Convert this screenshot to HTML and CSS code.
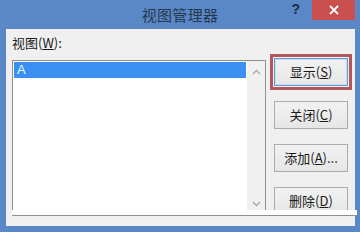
FILE: index.html
```html
<!DOCTYPE html>
<html>
<head>
<meta charset="utf-8">
<link rel="stylesheet" href="styles.css">
</head>
<body>
<div class="window">
  <div class="titlebar">
    <div></div>
    <div class="title">视图管理器</div>
    <div class="controls">
      <span class="help">?</span>
      <span class="close"><svg width="10" height="10" viewBox="0 0 10 10"><path d="M1 1L9 9M9 1L1 9" stroke="#fff" stroke-width="1.8" fill="none"/></svg></span>
    </div>
  </div>
  <div class="client">
    <div class="left">
      <div class="label">视图(<u>W</u>):</div>
      <div class="listbox">
        <div class="items">
          <div class="item sel">A</div>
        </div>
        <div class="scroll">
          <svg width="9" height="6" viewBox="0 0 9 6"><path d="M1 5L4.5 1.5L8 5" stroke="#a6a6a6" stroke-width="1.3" fill="none"/></svg>
          <svg width="9" height="6" viewBox="0 0 9 6"><path d="M1 1L4.5 4.5L8 1" stroke="#a6a6a6" stroke-width="1.3" fill="none"/></svg>
        </div>
      </div>
    </div>
    <div class="buttons">
      <div class="btn default">显示(<u>S</u>)</div>
      <div class="btn">关闭(<u>C</u>)</div>
      <div class="btn">添加(<u>A</u>)...</div>
      <div class="btn">删除(<u>D</u>)</div>
    </div>
  </div>
  <div class="strip"></div>
</div>
</body>
</html>
```
FILE: styles.css
```css
html, body {
  margin: 0;
  padding: 0;
}
body {
  width: 360px;
  height: 232px;
  background: #5a88c6;
  font-family: "Noto Sans CJK SC", "Noto Sans", sans-serif;
  overflow: hidden;
}
.window {
  position: relative;
  width: 360px;
  height: 232px;
}
.titlebar {
  height: 29px;
  display: grid;
  grid-template-columns: 1fr auto 1fr;
  align-items: start;
}
.title {
  font-size: 15px;
  line-height: 29px;
  color: #263750;
  letter-spacing: 0.3px;
}
.controls {
  display: flex;
  justify-content: flex-end;
  align-items: flex-start;
  padding-right: 5px;
}
.help {
  font-family: "Liberation Sans", sans-serif;
  font-weight: bold;
  font-size: 14px;
  line-height: 20px;
  color: #1c2c48;
  margin-right: 12px;
  margin-top: -1px;
}
.close {
  width: 43px;
  height: 20px;
  background: #c9504f;
  display: flex;
  align-items: center;
  justify-content: center;
}
.client {
  margin: 0 5px 0 6px;
  height: 197px;
  background: #f0f0f0;
  display: flex;
  padding: 6px 0 0 6px;
  box-sizing: border-box;
}
.left {
  display: flex;
  flex-direction: column;
}
.label {
  font-size: 13px;
  line-height: 16px;
  color: #1a1a1a;
  height: 16px;
  margin-bottom: 9px;
}
.label u, .btn u {
  text-underline-offset: 1px;
}
.listbox {
  width: 252px;
  height: 154px;
  border: 1px solid #8e8f92;
  background: #fff;
  display: flex;
}
.items {
  flex: 1;
  padding: 1px 1px 0 1px;
}
.item {
  height: 16px;
  line-height: 16px;
  font-family: "Liberation Sans", sans-serif;
  font-size: 13px;
  padding-left: 3px;
}
.item.sel {
  background: #3a8ff0;
  color: #e4fbff;
}
.scroll {
  width: 18px;
  background: #f0f0f0;
  display: flex;
  flex-direction: column;
  justify-content: space-between;
  align-items: center;
  padding: 8px 0 8px;
  box-sizing: border-box;
}
.buttons {
  margin-left: 8px;
  padding-top: 23px;
  display: flex;
  flex-direction: column;
  gap: 15px;
}
.btn {
  width: 72px;
  height: 26px;
  border: 1px solid #acacac;
  background: linear-gradient(#f2f2f2, #e6e6e6);
  font-size: 13px;
  line-height: 26px;
  text-align: center;
  color: #1a1a1a;
}
.btn.default {
  border-color: #5d9ad6;
  box-shadow: inset 0 0 0 1px #c5def5;
  outline: 3px solid #b4575b;
  outline-offset: 1px;
}
.strip {
  position: absolute;
  left: 12px;
  top: 210px;
  width: 345px;
  height: 5px;
  background: #fdfdfd;
  border-bottom: 1px solid #8e8f92;
}
```
